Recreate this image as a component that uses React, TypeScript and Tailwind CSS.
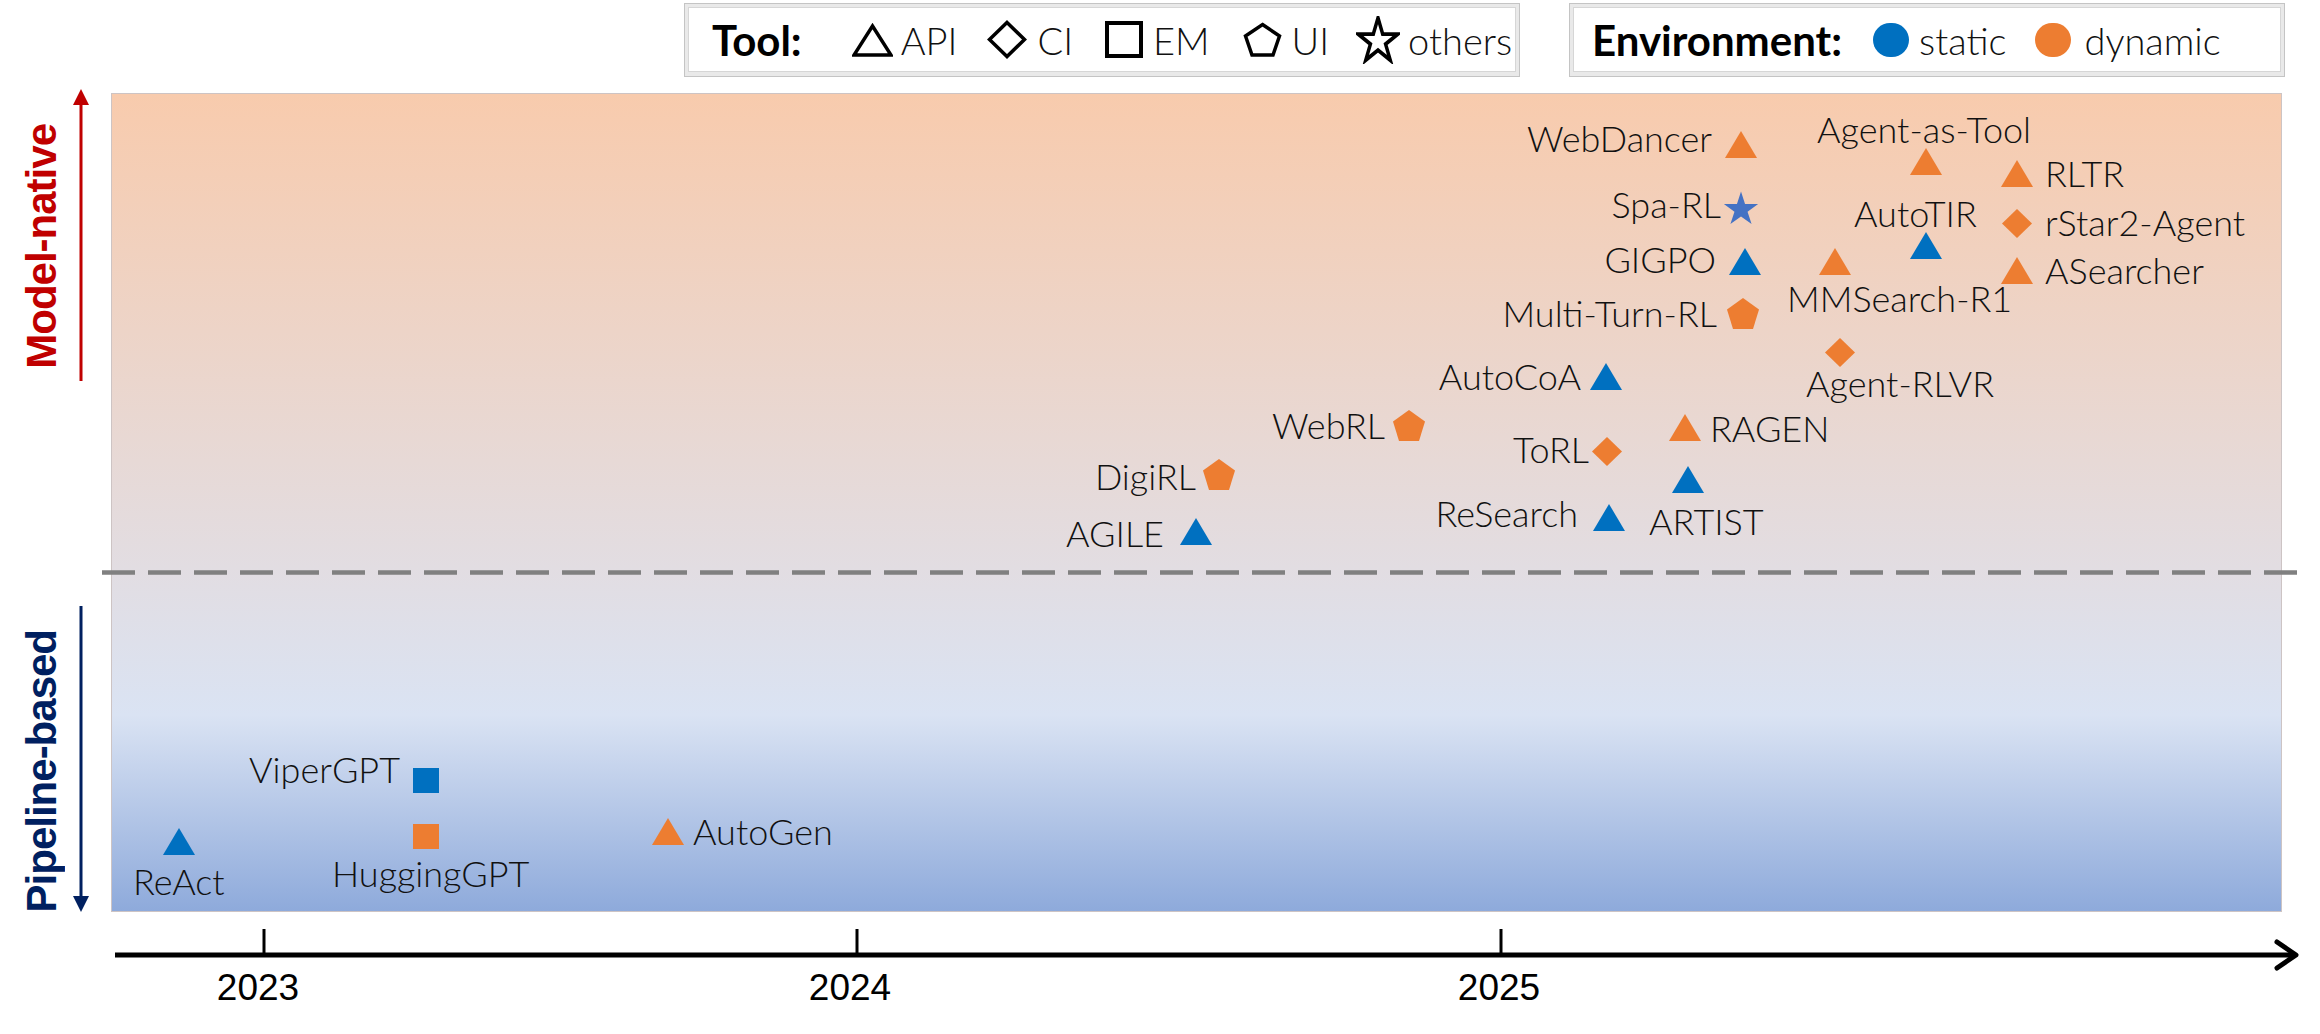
import React from "react";

type Shape = "tri" | "dia" | "sq" | "pent" | "star";

type Item = {
  name: string;
  shape: Shape;
  color: string;
  cx: number;
  cy: number;
  side: "l" | "r";
  tx: number;
  ty: number;
};

const BLUE = "#0070c0";
const ORANGE = "#ed7d31";
const STAR = "#4472c4";

// plot origin on the page
const OX = 111;
const OY = 93;

const items: Item[] = [
  { name: "WebDancer", shape: "tri", color: ORANGE, cx: 1740, cy: 143, side: "l", tx: 1711, ty: 137 },
  { name: "Agent-as-Tool", shape: "tri", color: ORANGE, cx: 1925, cy: 160, side: "r", tx: 1816, ty: 128 },
  { name: "RLTR", shape: "tri", color: ORANGE, cx: 2016, cy: 172, side: "r", tx: 2044, ty: 172 },
  { name: "Spa-RL", shape: "star", color: STAR, cx: 1740, cy: 207, side: "l", tx: 1720, ty: 203 },
  { name: "AutoTIR", shape: "tri", color: BLUE, cx: 1925, cy: 244, side: "r", tx: 1853, ty: 212 },
  { name: "rStar2-Agent", shape: "dia", color: ORANGE, cx: 2016, cy: 222, side: "r", tx: 2044, ty: 221 },
  { name: "GIGPO", shape: "tri", color: BLUE, cx: 1744, cy: 260, side: "l", tx: 1715, ty: 258 },
  { name: "MMSearch-R1", shape: "tri", color: ORANGE, cx: 1834, cy: 260, side: "r", tx: 1786, ty: 297 },
  { name: "ASearcher", shape: "tri", color: ORANGE, cx: 2016, cy: 269, side: "r", tx: 2044, ty: 269 },
  { name: "Multi-Turn-RL", shape: "pent", color: ORANGE, cx: 1742, cy: 312, side: "l", tx: 1716, ty: 312 },
  { name: "Agent-RLVR", shape: "dia", color: ORANGE, cx: 1839, cy: 351, side: "r", tx: 1805, ty: 382 },
  { name: "AutoCoA", shape: "tri", color: BLUE, cx: 1605, cy: 375, side: "l", tx: 1580, ty: 375 },
  { name: "WebRL", shape: "pent", color: ORANGE, cx: 1408, cy: 424, side: "l", tx: 1384, ty: 424 },
  { name: "RAGEN", shape: "tri", color: ORANGE, cx: 1684, cy: 426, side: "r", tx: 1709, ty: 427 },
  { name: "ToRL", shape: "dia", color: ORANGE, cx: 1606, cy: 450, side: "l", tx: 1588, ty: 448 },
  { name: "DigiRL", shape: "pent", color: ORANGE, cx: 1218, cy: 473, side: "l", tx: 1195, ty: 475 },
  { name: "ARTIST", shape: "tri", color: BLUE, cx: 1687, cy: 478, side: "r", tx: 1648, ty: 520 },
  { name: "AGILE", shape: "tri", color: BLUE, cx: 1195, cy: 530, side: "l", tx: 1163, ty: 532 },
  { name: "ReSearch", shape: "tri", color: BLUE, cx: 1608, cy: 516, side: "l", tx: 1577, ty: 512 },
  { name: "ViperGPT", shape: "sq", color: BLUE, cx: 425, cy: 779, side: "l", tx: 399, ty: 768 },
  { name: "HuggingGPT", shape: "sq", color: ORANGE, cx: 425, cy: 835, side: "r", tx: 331, ty: 872 },
  { name: "ReAct", shape: "tri", color: BLUE, cx: 178, cy: 840, side: "r", tx: 132, ty: 880 },
  { name: "AutoGen", shape: "tri", color: ORANGE, cx: 667, cy: 830, side: "r", tx: 692, ty: 830 },
];

const size: Record<Shape, [number, number]> = {
  tri: [32, 27],
  dia: [30, 29],
  sq: [26, 25],
  pent: [32, 31],
  star: [36, 35],
};

const starPts =
  "18,0.5 22.04,12.93 35.12,12.94 24.54,20.63 28.58,33.06 18,25.38 7.42,33.06 11.46,20.63 0.88,12.94 13.96,12.93";

function Marker({ shape, color }: { shape: Shape; color: string }) {
  const [w, h] = size[shape];
  return (
    <svg width={w} height={h} viewBox={`0 0 ${w} ${h}`} className="block">
      {shape === "tri" && <polygon points="16,0 32,27 0,27" fill={color} />}
      {shape === "dia" && <polygon points="15,0 30,14.5 15,29 0,14.5" fill={color} />}
      {shape === "sq" && <rect x="0" y="0" width="26" height="25" fill={color} />}
      {shape === "pent" && <polygon points="16,0 32,11.6 26,31 6,31 0,11.6" fill={color} />}
      {shape === "star" && <polygon points={starPts} fill={color} />}
    </svg>
  );
}

function LegendShape({ shape }: { shape: Shape }) {
  if (shape === "tri")
    return (
      <svg width="41" height="34" viewBox="0 0 41 34" className="block">
        <polygon points="20.5,3 39,32 2,32" fill="none" stroke="#000" strokeWidth="3.5" />
      </svg>
    );
  if (shape === "dia")
    return (
      <svg width="40" height="39" viewBox="0 0 40 39" className="block">
        <polygon points="20,2.5 37.5,19.5 20,36.5 2.5,19.5" fill="none" stroke="#000" strokeWidth="3.5" />
      </svg>
    );
  if (shape === "sq")
    return (
      <svg width="38" height="37" viewBox="0 0 38 37" className="block">
        <rect x="2" y="2" width="34" height="33" fill="none" stroke="#000" strokeWidth="4" />
      </svg>
    );
  if (shape === "pent")
    return (
      <svg width="39" height="35" viewBox="0 0 39 35" className="block">
        <polygon points="19.5,2.5 36.5,14 30,33 9,33 2.5,14" fill="none" stroke="#000" strokeWidth="3.5" />
      </svg>
    );
  return (
    <svg width="44" height="48" viewBox="-1 -1 38 37" preserveAspectRatio="none" className="block">
      <polygon points={starPts} fill="none" stroke="#000" strokeWidth="3" />
    </svg>
  );
}

function LegendBox({ width, children }: { width: string; children: React.ReactNode }) {
  return (
    <div className={`${width} h-[74px] border border-[#c4c4c4] bg-[#e9e9e9] pt-[3px] pl-[3px] pr-[3px] pb-[4px]`}>
      <div className="h-full border border-[#d6d6d6] bg-white flex items-center">{children}</div>
    </div>
  );
}

export default function App() {
  return (
    <div className="relative w-[2320px] h-[1034px] overflow-hidden bg-white font-['Lato',sans-serif] text-[#111]">
      {/* legends */}
      <div className="flex h-[86px] pt-[3px] pl-[684px] gap-[49px]">
        <LegendBox width="w-[836px]">
          <span className="ml-[23px] text-[42px] leading-none font-bold text-black">Tool:</span>
          <span className="ml-[50px]"><LegendShape shape="tri" /></span>
          <span className="ml-[8px] text-[38px] leading-none font-light">API</span>
          <span className="ml-[30px]"><LegendShape shape="dia" /></span>
          <span className="ml-[10px] text-[38px] leading-none font-light">CI</span>
          <span className="ml-[32px]"><LegendShape shape="sq" /></span>
          <span className="ml-[10px] text-[38px] leading-none font-light">EM</span>
          <span className="ml-[33px]"><LegendShape shape="pent" /></span>
          <span className="ml-[10px] text-[38px] leading-none font-light">UI</span>
          <span className="ml-[27px]"><LegendShape shape="star" /></span>
          <span className="ml-[8px] text-[38px] leading-none font-light">others</span>
        </LegendBox>
        <LegendBox width="w-[716px]">
          <span className="ml-[18px] text-[42px] leading-none font-bold text-black">Environment:</span>
          <span className="ml-[31px] w-[36px] h-[34px] rounded-full bg-[#0070c0]" />
          <span className="ml-[10px] text-[38px] leading-none font-light">static</span>
          <span className="ml-[29px] w-[36px] h-[34px] rounded-full bg-[#ed7d31]" />
          <span className="ml-[13px] text-[38px] leading-none font-light">dynamic</span>
        </LegendBox>
      </div>

      {/* chart row */}
      <div className="flex">
        {/* y axis labels */}
        <div className="w-[111px] shrink-0 flex flex-col pt-[3px]">
          <div className="flex h-[292px] items-end">
            <div className="ml-[21px] mb-[12px] [writing-mode:vertical-rl] rotate-180 font-['Liberation_Sans',Arial,sans-serif] text-[42px] leading-none font-bold tracking-[-1px] text-[#c00000] whitespace-nowrap">
              Model-native
            </div>
            <svg width="16" height="292" viewBox="0 0 16 292" className="ml-[10px] block self-stretch">
              <line x1="8" y1="14" x2="8" y2="292" stroke="#c00000" strokeWidth="3" />
              <polygon points="0,16 8,0 16,16" fill="#c00000" />
            </svg>
          </div>
          <div className="mt-[225px] flex h-[306px] items-end">
            <div className="ml-[21px] [writing-mode:vertical-rl] rotate-180 font-['Liberation_Sans',Arial,sans-serif] text-[42px] leading-none font-bold tracking-[-1px] text-[#002060] whitespace-nowrap">
              Pipeline-based
            </div>
            <svg width="16" height="306" viewBox="0 0 16 306" className="ml-[10px] block">
              <line x1="8" y1="0" x2="8" y2="292" stroke="#002060" strokeWidth="3" />
              <polygon points="0,290 8,306 16,290" fill="#002060" />
            </svg>
          </div>
        </div>

        {/* plot area */}
        <div className="relative mt-[7px] w-[2171px] h-[819px] border border-[#cdc4c4] bg-[linear-gradient(180deg,#f8cbad_0%,#e2dde2_58%,#dae3f3_76%,#8eaadb_100%)]">
          {items.map((it) => {
            const [w, h] = size[it.shape];
            return (
              <React.Fragment key={it.name}>
                <div
                  className="absolute"
                  style={{ left: it.cx - w / 2 - OX, top: it.cy - h / 2 - OY }}
                >
                  <Marker shape={it.shape} color={it.color} />
                </div>
                <div
                  className={
                    it.side === "l"
                      ? "absolute -translate-x-full -translate-y-1/2 whitespace-nowrap text-[36px] leading-none font-light text-[#111]"
                      : "absolute -translate-y-1/2 whitespace-nowrap text-[36px] leading-none font-light text-[#111]"
                  }
                  style={{ left: it.tx - OX, top: it.ty - OY }}
                >
                  {it.name}
                </div>
              </React.Fragment>
            );
          })}
        </div>
      </div>

      {/* x axis */}
      <svg width="2320" height="121" viewBox="0 0 2320 121" className="block">
        <line x1="115" y1="43" x2="2294" y2="43" stroke="#000" strokeWidth="5" />
        <polyline points="2277,30 2296,43 2277,56" fill="none" stroke="#000" strokeWidth="5" strokeLinecap="round" strokeLinejoin="round" />
        <line x1="264" y1="17" x2="264" y2="43" stroke="#000" strokeWidth="3" />
        <line x1="857" y1="17" x2="857" y2="43" stroke="#000" strokeWidth="3" />
        <line x1="1501" y1="17" x2="1501" y2="43" stroke="#000" strokeWidth="3" />
        <g fontFamily="'Liberation Sans', Arial, sans-serif" fontSize="37" textAnchor="middle" fill="#000">
          <text x="258" y="88">2023</text>
          <text x="850" y="88">2024</text>
          <text x="1499" y="88">2025</text>
        </g>
      </svg>

      {/* divider between the two regimes, overlaid across the plot */}
      <svg width="2197" height="5" viewBox="0 0 2197 5" className="absolute left-[102px] top-[570px] block">
        <line x1="0" y1="2.5" x2="2197" y2="2.5" stroke="#808080" strokeWidth="4.5" strokeDasharray="33 13" />
      </svg>
    </div>
  );
}
